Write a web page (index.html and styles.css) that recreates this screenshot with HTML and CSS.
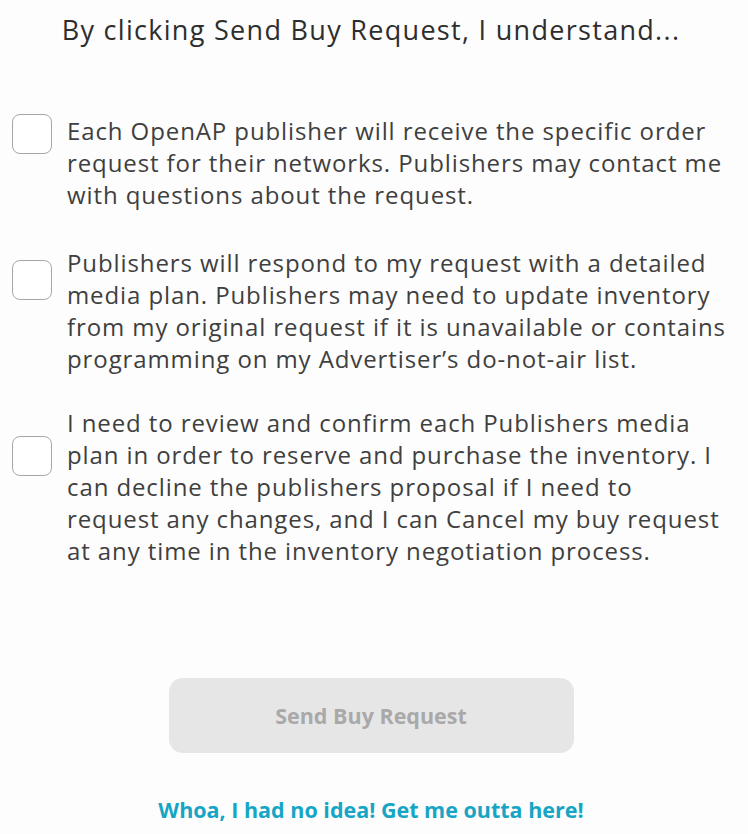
FILE: index.html
```html
<!DOCTYPE html>
<html lang="en">
<head>
<meta charset="utf-8">
<title>Send Buy Request</title>
<link rel="stylesheet" href="styles.css">
</head>
<body>
<main class="panel">
  <h1 class="title">By clicking Send Buy Request, I understand...</h1>
  <ul class="terms">
    <li class="term">
      <span class="checkbox checkbox--a"></span>
      <p class="term-text">Each OpenAP publisher will receive the specific order<br>request for their networks. Publishers may contact me<br>with questions about the request.</p>
    </li>
    <li class="term term--b">
      <span class="checkbox checkbox--b"></span>
      <p class="term-text">Publishers will respond to my request with a detailed<br>media plan. Publishers may need to update inventory<br>from my original request if it is unavailable or contains<br>programming on my Advertiser’s do-not-air list.</p>
    </li>
    <li class="term term--c">
      <span class="checkbox checkbox--c"></span>
      <p class="term-text">I need to review and confirm each Publishers media<br>plan in order to reserve and purchase the inventory. I<br>can decline the publishers proposal if I need to<br>request any changes, and I can Cancel my buy request<br>at any time in the inventory negotiation process.</p>
    </li>
  </ul>
  <button class="send-btn" type="button" disabled>Send Buy Request</button>
  <a class="escape" href="#">Whoa, I had no idea! Get me outta here!</a>
</main>
</body>
</html>
```

FILE: styles.css
```css
* { box-sizing: border-box; }
html, body { margin: 0; padding: 0; background: #fdfdfd; }
body { font-family: "Open Sans", "Liberation Sans", sans-serif; color: #3c3c3c; }
.panel {
  width: 742px;
  display: flex;
  flex-direction: column;
  align-items: center;
}
.title {
  margin: 12px 0 0;
  font-size: 27px;
  font-weight: 400;
  line-height: 36px;
  color: #2e2e2e;
  letter-spacing: 1.3px;
  white-space: nowrap;
}
.terms {
  list-style: none;
  margin: 67px 0 0;
  padding: 0 0 0 12px;
  width: 100%;
  display: flex;
  flex-direction: column;
}
.term {
  display: flex;
  align-items: flex-start;
  gap: 15px;
}
.term--b { margin-top: 36px; }
.term--c { margin-top: 32px; }
.checkbox {
  flex: none;
  width: 40px;
  height: 40px;
  border: 1.5px solid #a6a6a6;
  border-radius: 8px;
  background: #fff;
}
.checkbox--a { margin-top: -1px; }
.checkbox--b { margin-top: 13px; }
.checkbox--c { margin-top: 29px; }
.term-text {
  margin: 0;
  font-size: 24px;
  line-height: 32px;
  letter-spacing: 0.9px;
  color: #3f3f3f;
  white-space: nowrap;
}
.send-btn {
  margin-top: 111px;
  width: 405px;
  height: 75px;
  border: none;
  border-radius: 14px;
  background: #e6e6e6;
  color: #a9a9a9;
  font-family: "Open Sans", "Liberation Sans", sans-serif;
  font-weight: 700;
  font-size: 21.5px;
}
.escape {
  margin-top: 45px;
  line-height: 24px;
  font-size: 21.5px;
  font-weight: 700;
  color: #16a5c4;
  text-decoration: none;
}
```
